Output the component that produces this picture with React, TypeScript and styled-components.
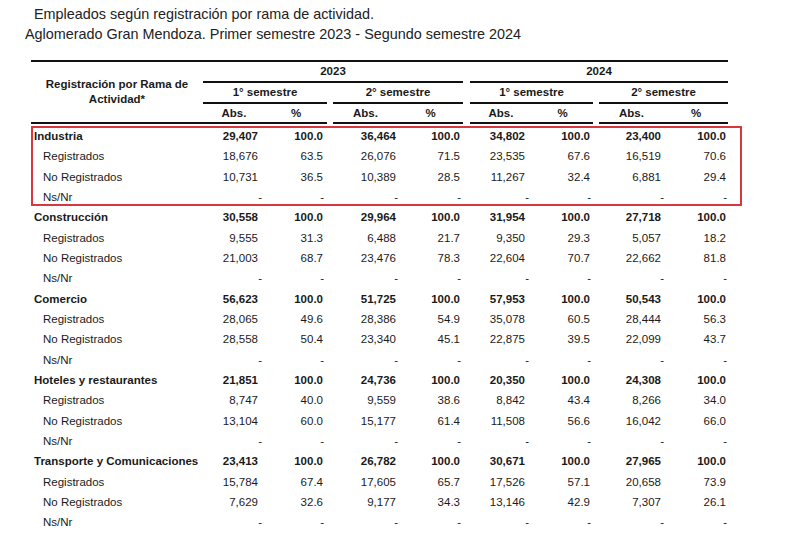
import styled, { createGlobalStyle } from "styled-components";

const GlobalStyle = createGlobalStyle`
  body {
    margin: 0;
    background: #ffffff;
    font-family: "Liberation Sans", Arial, sans-serif;
    color: #1a1a1a;
  }
`;

const COLS = "172px 62px 62px 6px 65px 65px 7px 62px 61px 6px 65px 64px";
const VALUE_COLS = [2, 3, 5, 6, 8, 9, 11, 12];
const VALUE_PAD = [7, 4, 2, 3, 7, 3, 3, 2];

const Page = styled.div`
  padding-top: 4px;
  width: 790px;
`;

const TitleLine = styled.div<{ $indent: number }>`
  font-size: 14.4px;
  line-height: 20px;
  color: #222;
  margin-left: ${(p) => p.$indent}px;
  white-space: nowrap;
`;

const Table = styled.div`
  margin-top: 17px;
  margin-left: 31px;
  width: 697px;
  font-size: 11.5px;
`;

const Head = styled.div`
  display: grid;
  grid-template-columns: ${COLS};
  grid-template-rows: 21px 21px 20px;
  border-top: 2px solid #111;
  margin-top: -1px;
`;

const HeadCell = styled.div<{ $col: string; $row: string; $line?: boolean }>`
  grid-column: ${(p) => p.$col};
  grid-row: ${(p) => p.$row};
  display: flex;
  align-items: center;
  justify-content: center;
  text-align: center;
  font-weight: bold;
  line-height: 15px;
  border-bottom: ${(p) => (p.$line ? "2px solid #111" : "none")};
`;

const Body = styled.div`
  padding-top: 2px;
`;

const Group = styled.div<{ $marked?: boolean }>`
  position: relative;

  &::after {
    content: "";
    display: ${(p) => (p.$marked ? "block" : "none")};
    position: absolute;
    left: 0;
    top: 0;
    right: -14px;
    bottom: 1px;
    border: 2px solid #d9373f;
    pointer-events: none;
  }
`;

const Row = styled.div`
  display: grid;
  grid-template-columns: ${COLS};
  height: 20.33px;
  align-items: center;
`;

const Label = styled.div<{ $sub?: boolean }>`
  grid-column: 1;
  padding-left: ${(p) => (p.$sub ? 12 : 3)}px;
  font-weight: ${(p) => (p.$sub ? "normal" : "bold")};
  white-space: nowrap;
`;

const Value = styled.div<{ $col: number; $pad: number; $bold?: boolean }>`
  grid-column: ${(p) => p.$col};
  text-align: right;
  padding-right: ${(p) => p.$pad}px;
  font-weight: ${(p) => (p.$bold ? "bold" : "normal")};
`;

interface Branch {
  name: string;
  total: string[];
  reg: string[];
  noReg: string[];
}

const h = (a: string, b: string, c: string, d: string) => [a, "100.0", b, "100.0", c, "100.0", d, "100.0"];
const DASH = ["-", "-", "-", "-", "-", "-", "-", "-"];

const branches: Branch[] = [
  {
    name: "Industria",
    total: h("29,407", "36,464", "34,802", "23,400"),
    reg: ["18,676", "63.5", "26,076", "71.5", "23,535", "67.6", "16,519", "70.6"],
    noReg: ["10,731", "36.5", "10,389", "28.5", "11,267", "32.4", "6,881", "29.4"],
  },
  {
    name: "Construcción",
    total: h("30,558", "29,964", "31,954", "27,718"),
    reg: ["9,555", "31.3", "6,488", "21.7", "9,350", "29.3", "5,057", "18.2"],
    noReg: ["21,003", "68.7", "23,476", "78.3", "22,604", "70.7", "22,662", "81.8"],
  },
  {
    name: "Comercio",
    total: h("56,623", "51,725", "57,953", "50,543"),
    reg: ["28,065", "49.6", "28,386", "54.9", "35,078", "60.5", "28,444", "56.3"],
    noReg: ["28,558", "50.4", "23,340", "45.1", "22,875", "39.5", "22,099", "43.7"],
  },
  {
    name: "Hoteles y restaurantes",
    total: h("21,851", "24,736", "20,350", "24,308"),
    reg: ["8,747", "40.0", "9,559", "38.6", "8,842", "43.4", "8,266", "34.0"],
    noReg: ["13,104", "60.0", "15,177", "61.4", "11,508", "56.6", "16,042", "66.0"],
  },
  {
    name: "Transporte y Comunicaciones",
    total: h("23,413", "26,782", "30,671", "27,965"),
    reg: ["15,784", "67.4", "17,605", "65.7", "17,526", "57.1", "20,658", "73.9"],
    noReg: ["7,629", "32.6", "9,177", "34.3", "13,146", "42.9", "7,307", "26.1"],
  },
];

// dashes sit a little further right than the figures, as in the source sheet
const padFor = (v: string, i: number) => {
  if (v !== "-") return VALUE_PAD[i];
  return Math.max(0, VALUE_PAD[i] - (i % 2 === 0 ? 4 : 1));
};

function DataRow({ label, values, sub }: { label: string; values: string[]; sub?: boolean }) {
  return (
    <Row>
      <Label $sub={sub}>{label}</Label>
      {values.map((v, i) => (
        <Value key={i} $col={VALUE_COLS[i]} $pad={padFor(v, i)} $bold={!sub}>
          {v}
        </Value>
      ))}
    </Row>
  );
}

export default function App() {
  return (
    <Page>
      <GlobalStyle />
      <TitleLine $indent={34}>Empleados según registración por rama de actividad.</TitleLine>
      <TitleLine $indent={25}>Aglomerado Gran Mendoza. Primer semestre 2023 - Segundo semestre 2024</TitleLine>

      <Table>
        <Head>
          <HeadCell $col="1" $row="1 / 4" $line>
            Registración por Rama de
            <br />
            Actividad*
          </HeadCell>
          <HeadCell $col="2 / 7" $row="1" $line>2023</HeadCell>
          <HeadCell $col="8 / 13" $row="1" $line>2024</HeadCell>

          <HeadCell $col="2 / 4" $row="2" $line>1° semestre</HeadCell>
          <HeadCell $col="5 / 7" $row="2" $line>2° semestre</HeadCell>
          <HeadCell $col="8 / 10" $row="2" $line>1° semestre</HeadCell>
          <HeadCell $col="11 / 13" $row="2" $line>2° semestre</HeadCell>

          {VALUE_COLS.map((c, i) => (
            <HeadCell key={c} $col={String(c)} $row="3" $line>
              {i % 2 === 0 ? "Abs." : "%"}
            </HeadCell>
          ))}
        </Head>

        <Body>
          {branches.map((b, i) => (
            <Group key={b.name} $marked={i === 0}>
              <DataRow label={b.name} values={b.total} />
              <DataRow label="Registrados" values={b.reg} sub />
              <DataRow label="No Registrados" values={b.noReg} sub />
              <DataRow label="Ns/Nr" values={DASH} sub />
            </Group>
          ))}
        </Body>
      </Table>
    </Page>
  );
}
